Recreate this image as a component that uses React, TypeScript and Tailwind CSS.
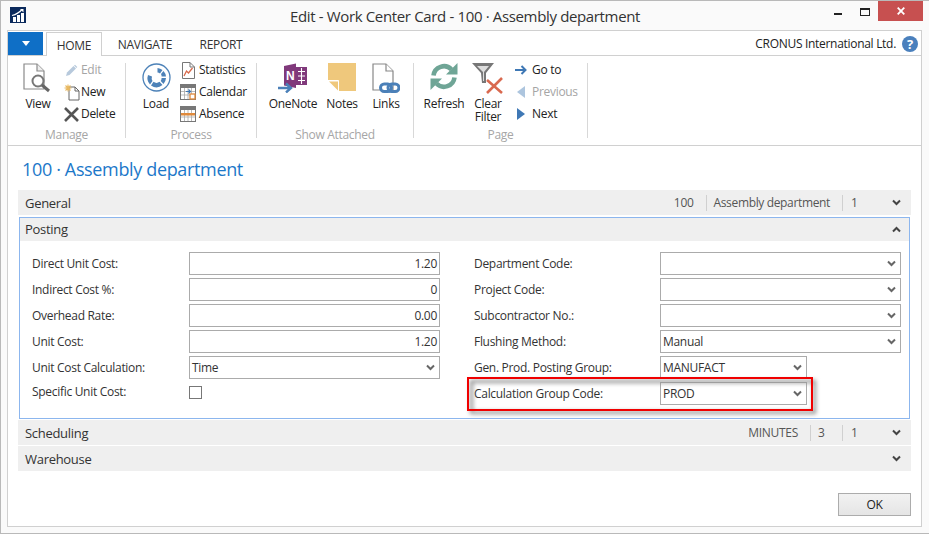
import React from "react";

const Chev = ({ up = false, color = "#444" }: { up?: boolean; color?: string }) => (
  <svg width="9" height="7" viewBox="0 0 9 7" className="shrink-0">
    <path d={up ? "M1 5.5 L4.5 2 L8 5.5" : "M1 1.5 L4.5 5 L8 1.5"} fill="none" stroke={color} strokeWidth="2" />
  </svg>
);

const ViewIcon = () => (
  <svg width="30" height="30" viewBox="0 0 30 30">
    <path d="M1 1H14L21 8V26H1Z" fill="#fff" stroke="#8a8a8a" strokeWidth="1.2" />
    <path d="M14 1V8H21" fill="#eee" stroke="#8a8a8a" strokeWidth="1.2" />
    <circle cx="15" cy="18" r="5.5" fill="#fff" stroke="#777" strokeWidth="2" />
    <path d="M19 22L26 28" stroke="#666" strokeWidth="3" />
  </svg>
);
const EditIcon = () => (
  <svg width="13" height="13" viewBox="0 0 13 13">
    <path d="M1 12L2 8.5L8.5 2L11 4.5L4.5 11Z" fill="#b7c9dc" />
    <path d="M9 1.5L10 .7L12.3 3L11.5 4Z" fill="#b7c9dc" />
  </svg>
);
const NewIcon = () => (
  <svg width="16" height="17" viewBox="0 0 16 17">
    <path d="M5 3H11L15 7V16H5Z" fill="#fff" stroke="#666" />
    <path d="M11 3V7H15" fill="none" stroke="#666" />
    <path d="M4 .5V7.5M.5 4H7.5M1.5 1.5L6.5 6.5M6.5 1.5L1.5 6.5" stroke="#e8b860" strokeWidth="1.1" />
  </svg>
);
const DeleteIcon = () => (
  <svg width="15" height="15" viewBox="0 0 15 15">
    <path d="M1 1L14 14M14 1L1 14" stroke="#555" strokeWidth="2.6" />
  </svg>
);
const LoadIcon = () => (
  <svg width="29" height="29" viewBox="0 0 29 29">
    <circle cx="14.5" cy="14.5" r="13.5" fill="#fff" stroke="#4d82b8" strokeWidth="1.3" />
    <path d="M15.5 5A9.5 9.5 0 0 1 20.5 7L18 10.5A5 5 0 0 0 15.5 9.5Z" fill="#4d82b8" />
    <path d="M21.5 8A9.5 9.5 0 0 1 24 13.5H19.6A5 5 0 0 0 19 11Z" fill="#4d82b8" />
    <path d="M24 15A9.5 9.5 0 0 1 21.5 21L18.7 18A5 5 0 0 0 19.6 15Z" fill="#4d82b8" />
    <path d="M20.5 22A9.5 9.5 0 0 1 9 22.5L11.5 18.8A5 5 0 0 0 17.5 18.8Z" fill="#4d82b8" />
    <path d="M8 21.5A9.5 9.5 0 0 1 6 12L10 13.5A5 5 0 0 0 10.5 18Z" fill="#4d82b8" />
  </svg>
);
const StatsIcon = () => (
  <svg width="13" height="17" viewBox="0 0 13 17">
    <path d="M.5 .5H8L12.5 5V16.5H.5Z" fill="#fff" stroke="#777" />
    <path d="M8 .5V5H12.5" fill="none" stroke="#777" />
    <path d="M2 14L4.5 9L6.5 11L10.5 6" fill="none" stroke="#d9694a" strokeWidth="1.3" />
  </svg>
);
const GridBase = ({ children }: { children?: React.ReactNode }) => (
  <svg width="16" height="16" viewBox="0 0 16 16">
    <rect x=".5" y=".5" width="15" height="15" fill="#fff" stroke="#777" />
    <rect x="1" y="1" width="14" height="3" fill="#777" />
    <path d="M4.5 4V15M8 4V15M11.5 4V15M1 7.5H15M1 11H15" stroke="#aaa" strokeWidth=".8" />
    {children}
  </svg>
);
const CalIcon = () => (
  <GridBase>
    <path d="M6 7.5H10M8.5 5.5L10.5 7.5L8.5 9.5" fill="none" stroke="#3f78b5" strokeWidth="1.2" />
    <rect x="10" y="10" width="5" height="5" fill="#fff" stroke="#e08a3c" strokeWidth="1.3" />
  </GridBase>
);
const AbsIcon = () => (
  <GridBase>
    <rect x="1" y="7" width="14" height="2.5" fill="#e08a3c" />
  </GridBase>
);
const OneNoteIcon = () => (
  <svg width="32" height="30" viewBox="0 0 32 30">
    <path d="M7 3L19 .5V25L7 22.5Z" fill="#80397b" />
    <rect x="19" y="4" width="11" height="18" fill="#80397b" />
    <path d="M21 8.5H28M21 13H28M21 17.5H28M24.5 5V21" stroke="#fff" strokeWidth="1.1" />
    <text x="9" y="17" fill="#fff" fontSize="12" fontWeight="700" fontFamily="Liberation Sans">N</text>
    <path d="M1 25H14M9 20.5L14 25L9 29.5" fill="none" stroke="#4b80b8" strokeWidth="2.4" />
  </svg>
);
const NotesIcon = () => (
  <svg width="28" height="28" viewBox="0 0 28 28">
    <path d="M0 0H28V28H11L0 17Z" fill="#efc87c" />
    <path d="M0 17.5H10.5V28" fill="#fff" stroke="#fff" strokeWidth="1" />
    <path d="M1 18.5H10V27.5Z" fill="#efc87c" />
  </svg>
);
const LinksIcon = () => (
  <svg width="28" height="31" viewBox="0 0 28 31">
    <path d="M1 1H14L21 8V27H1Z" fill="#fff" stroke="#888" strokeWidth="1.2" />
    <path d="M14 1V8H21" fill="#fff" stroke="#888" strokeWidth="1.2" />
    <rect x="8.5" y="21" width="11" height="7.5" rx="3.7" fill="#fff" stroke="#4b80b8" strokeWidth="3" />
    <rect x="16" y="21" width="11" height="7.5" rx="3.7" fill="none" stroke="#4b80b8" strokeWidth="3" />
  </svg>
);
const RefreshIcon = () => (
  <svg width="28" height="27" viewBox="0 0 28 27">
    <path d="M3.5 12.5A10.5 10.5 0 0 1 21.5 6.5" fill="none" stroke="#6fa596" strokeWidth="4.6" />
    <path d="M16 11.5H27.5V0Z" fill="#6fa596" />
    <path d="M24.5 14.5A10.5 10.5 0 0 1 6.5 20.5" fill="none" stroke="#6fa596" strokeWidth="4.6" />
    <path d="M12 15.5H.5V27Z" fill="#6fa596" />
  </svg>
);
const FilterIcon = () => (
  <svg width="32" height="31" viewBox="0 0 32 31">
    <path d="M0 0H22L14 10V20H10L9 10Z" fill="#777" />
    <path d="M5 3H17L12 9V18H11V9Z" fill="#ddd" />
    <path d="M15 17L30 30M30 15L15 30" stroke="#d9694f" strokeWidth="2.6" />
  </svg>
);
const GotoIcon = () => (
  <svg width="12" height="10" viewBox="0 0 12 10">
    <path d="M0 5H10M6.5 1L10.5 5L6.5 9" fill="none" stroke="#3f78b5" strokeWidth="2" />
  </svg>
);
const PrevIcon = () => (
  <svg width="8" height="12" viewBox="0 0 8 12"><path d="M8 0V12L0 6Z" fill="#adc5de" /></svg>
);
const NextIcon = () => (
  <svg width="8" height="12" viewBox="0 0 8 12"><path d="M0 0V12L8 6Z" fill="#3f78b5" /></svg>
);
const AppLogo = () => (
  <svg width="16" height="16" viewBox="0 0 16 16">
    <rect width="16" height="16" fill="#0b2a5c" />
    <rect x="3" y="10" width="3" height="5" fill="#fff" />
    <rect x="7" y="8" width="3" height="7" fill="#fff" />
    <rect x="11" y="6" width="3" height="9" fill="#fff" />
    <path d="M2 8.5C6 7.5 9 6 12 2.5" fill="none" stroke="#fff" strokeWidth="1.2" />
    <path d="M10 2H13.5V5.5Z" fill="#fff" />
  </svg>
);

const Big = ({ w, icon, label }: { w: string; icon: React.ReactNode; label: React.ReactNode }) => (
  <div className={`flex flex-col items-center shrink-0 ${w}`}>
    <div className="h-[34px] flex items-start justify-center">{icon}</div>
    <div className="text-center leading-[13px] text-[#222]">{label}</div>
  </div>
);
const Small = ({ iw, icon, label, off }: { iw: string; icon: React.ReactNode; label: string; off?: boolean }) => (
  <div className={`flex items-center h-[14px] ${off ? "text-[#a5a5a5]" : "text-[#222]"}`}>
    <div className={`${iw} shrink-0 flex items-center`}>{icon}</div>
    <span className="whitespace-nowrap">{label}</span>
  </div>
);
const Group = ({ w, title, children }: { w: string; title: string; children: React.ReactNode }) => (
  <div className={`${w} shrink-0 h-[75px] my-[7px] border-r border-[#d8d8d8] flex flex-col`}>
    <div className="h-[67px] shrink-0 flex">{children}</div>
    <div className="h-[10px] shrink-0 leading-[10px] text-center text-[#a6a6a6]">{title}</div>
  </div>
);
const SmallCol = ({ cls, children }: { cls: string; children: React.ReactNode }) => (
  <div className={`flex flex-col gap-[8px] ${cls}`}>{children}</div>
);

const Section = ({ title, right, gap }: { title: string; right?: React.ReactNode; gap: string }) => (
  <div className={`h-[25px] shrink-0 bg-[#efefef] flex items-center pl-[7px] ${gap}`}>
    <span className="text-[13px] text-[#333] pt-[2px]">{title}</span>
    <div className="ml-auto flex items-center h-full text-[#555]">{right}</div>
    <div className="w-[43px] pl-[24px] flex shrink-0"><Chev /></div>
  </div>
);
const Sep = () => <div className="h-[16px] w-px bg-[#d0d0d0]" />;

const Label = ({ text, w }: { text: string; w: string }) => (
  <div className={`${w} shrink-0 text-[#333] whitespace-nowrap`}>{text}</div>
);
const Input = ({ w, value, right, select }: { w: string; value?: string; right?: boolean; select?: boolean }) => (
  <div className={`${w} h-[23px] border border-[#ababab] bg-white flex items-center px-[2px] text-[#333] ${right ? "justify-end" : ""}`}>
    <span>{value}</span>
    {select && <span className="ml-auto pr-[2px] flex"><Chev color="#666" /></span>}
  </div>
);
const LRow = ({ label, value, select }: { label: string; value: string; select?: boolean }) => (
  <div className="flex items-center h-[23px]">
    <Label text={label} w="w-[157px]" />
    <Input w="w-[251px]" value={value} right={!select} select={select} />
  </div>
);
const RRow = ({ label, value, short }: { label: string; value?: string; short?: boolean }) => (
  <div className="flex items-center h-[23px]">
    <Label text={label} w="w-[186px]" />
    <Input w={short ? "w-[147px]" : "w-[241px]"} value={value} select />
  </div>
);

export default function App() {
  return (
    <div
      className="w-[929px] h-[534px] bg-[#fafafa] border-t border-l border-b border-[#b9b9b9] flex flex-col text-[12px] overflow-hidden tracking-[-0.3px]"
      style={{ fontFamily: '"Open Sans", sans-serif' }}
    >
      {/* title bar */}
      <div className="h-[29px] flex items-start shrink-0 relative">
        <div className="ml-[9px] mt-[6px]"><AppLogo /></div>
        <div className="flex-1 text-center text-[15px] leading-[30px] text-[#333] pl-[70px] tracking-[-0.35px]">
          Edit - Work Center Card - 100 · Assembly department
        </div>
        <div className="mt-[12px] w-[8px] h-[2px] bg-[#222]" />
        <div className="ml-[18px] mt-[7px] w-[10px] h-[8px] border border-t-2 border-[#222]" />
        <div className="ml-[8px] mr-[6px] w-[45px] h-[20px] bg-[#c75050] flex items-center justify-center">
          <svg width="8" height="8" viewBox="0 0 8 8"><path d="M.7 .7L7.3 7.3M7.3 .7L.7 7.3" stroke="#fff" strokeWidth="1.8" /></svg>
        </div>
      </div>

      {/* inner frame */}
      <div className="ml-[6px] w-[915px] h-[497px] border border-[#d0d0d0] bg-white flex flex-col shrink-0">
        {/* tabs */}
        <div className="h-[25px] flex items-end border-b border-[#d0d0d0] shrink-0 text-[#333]">
          <div className="w-[35px] h-[23px] bg-[#0f6fc6] flex items-center justify-center">
            <svg width="8" height="5" viewBox="0 0 8 5"><path d="M0 0H8L4 5Z" fill="#fff" /></svg>
          </div>
          <div className="ml-[3px] w-[56px] h-[24px] -mb-px border border-b-0 border-[#d0d0d0] bg-white text-center leading-[25px]">HOME</div>
          <div className="w-[82px] h-[23px] text-center leading-[25px] pl-[4px]">NAVIGATE</div>
          <div className="w-[66px] h-[23px] text-center leading-[25px] pl-[8px]">REPORT</div>
          <div className="ml-auto h-[23px] flex items-center text-[#222] pr-[3px]">
            <span>CRONUS International Ltd.</span>
            <div className="ml-[6px] w-[16px] h-[16px] rounded-full bg-[#4a80bd] text-white text-center text-[13px] leading-[16px] font-bold">?</div>
          </div>
        </div>

        {/* ribbon */}
        <div className="h-[90px] flex border-b border-[#d0d0d0] shrink-0">
          <Group w="w-[118px]" title="Manage">
            <div className="pl-[4px]" />
            <Big w="w-[52px]" icon={<ViewIcon />} label="View" />
            <SmallCol cls="">
              <Small iw="w-[17px]" icon={<div className="pl-[1px] flex"><EditIcon /></div>} label="Edit" off />
              <Small iw="w-[17px]" icon={<NewIcon />} label="New" />
              <Small iw="w-[17px]" icon={<DeleteIcon />} label="Delete" />
            </SmallCol>
          </Group>
          <Group w="w-[131px]" title="Process">
            <div className="pl-[10px]" />
            <Big w="w-[40px]" icon={<LoadIcon />} label="Load" />
            <SmallCol cls="ml-[4px]">
              <Small iw="w-[19px]" icon={<div className="pl-[2px] flex"><StatsIcon /></div>} label="Statistics" />
              <Small iw="w-[19px]" icon={<CalIcon />} label="Calendar" />
              <Small iw="w-[19px]" icon={<AbsIcon />} label="Absence" />
            </SmallCol>
          </Group>
          <Group w="w-[157px]" title="Show Attached">
            <div className="pl-[11px]" />
            <Big w="w-[50px]" icon={<OneNoteIcon />} label="OneNote" />
            <Big w="w-[48px]" icon={<NotesIcon />} label="Notes" />
            <Big w="w-[40px]" icon={<LinksIcon />} label="Links" />
          </Group>
          <Group w="w-[174px]" title="Page">
            <div className="pl-[10px]" />
            <Big w="w-[40px]" icon={<RefreshIcon />} label="Refresh" />
            <Big w="w-[48px]" icon={<FilterIcon />} label={<>Clear<br />Filter</>} />
            <SmallCol cls="ml-[2px]">
              <Small iw="w-[18px]" icon={<div className="pl-[1px] flex"><GotoIcon /></div>} label="Go to" />
              <Small iw="w-[18px]" icon={<div className="pl-[3px] flex"><PrevIcon /></div>} label="Previous" off />
              <Small iw="w-[18px]" icon={<div className="pl-[3px] flex"><NextIcon /></div>} label="Next" />
            </SmallCol>
          </Group>
        </div>

        {/* content */}
        <div className="flex-1 pl-[10px] pr-[10px] flex flex-col">
          <div className="h-[44px] shrink-0 pl-[4px] pt-[10px] text-[18px] leading-[26px] text-[#1c78c9] tracking-[-0.35px]">100 · Assembly department</div>
          <Section
            title="General"
            gap="mb-[2px]"
            right={
              <>
                <span>100</span>
                <div className="ml-[12px] mr-[7px] flex"><Sep /></div>
                <span className="tracking-[-0.35px]">Assembly department</span>
                <div className="ml-[12px] mr-[8px] flex"><Sep /></div>
                <span className="w-[17px]">1</span>
              </>
            }
          />
          <div className="h-[202px] mx-px border border-[#8cb6ee] shrink-0 flex flex-col">
            <div className="h-[23px] bg-[#efefef] flex items-center pl-[5px] pr-[8px] shrink-0">
              <span className="text-[13px] text-[#333]">Posting</span>
              <div className="ml-auto flex"><Chev up /></div>
            </div>
            <div className="flex pt-[11px] pl-[12px]">
              <div className="w-[442px] flex flex-col gap-[3px]">
                <LRow label="Direct Unit Cost:" value="1.20" />
                <LRow label="Indirect Cost %:" value="0" />
                <LRow label="Overhead Rate:" value="0.00" />
                <LRow label="Unit Cost:" value="1.20" />
                <LRow label="Unit Cost Calculation:" value="Time" select />
                <div className="flex items-center h-[20px]">
                  <Label text="Specific Unit Cost:" w="w-[157px]" />
                  <div className="w-[13px] h-[13px] border border-[#777] bg-white" />
                </div>
              </div>
              <div className="flex flex-col gap-[3px]">
                <RRow label="Department Code:" />
                <RRow label="Project Code:" />
                <RRow label="Subcontractor No.:" />
                <RRow label="Flushing Method:" value="Manual" />
                <RRow label="Gen. Prod. Posting Group:" value="MANUFACT" short />
                <div className="relative">
                  <RRow label="Calculation Group Code:" value="PROD" short />
                  <div className="absolute left-[-4px] top-[-2px] w-[346px] h-[34px] border-[3px] border-[#8f8f8f] blur-[2px]" />
                  <div className="absolute left-[-7px] top-[-5px] w-[346px] h-[34px] border-2 border-[#f00000]" />
                </div>
              </div>
            </div>
          </div>
          <Section
            title="Scheduling"
            gap="mb-px mt-px"
            right={
              <>
                <span>MINUTES</span>
                <div className="ml-[12px] mr-[7px] flex"><Sep /></div>
                <span className="w-[24px]">3</span>
                <div className="mr-[8px] flex"><Sep /></div>
                <span className="w-[17px]">1</span>
              </>
            }
          />
          <Section title="Warehouse" gap="" />
          <div className="flex justify-end mt-[22px]">
            <div className="w-[73px] h-[23px] border border-[#acacac] bg-gradient-to-b from-[#f2f2f2] to-[#e5e5e5] text-center leading-[21px] text-[#222]">OK</div>
          </div>
        </div>
      </div>
    </div>
  );
}
